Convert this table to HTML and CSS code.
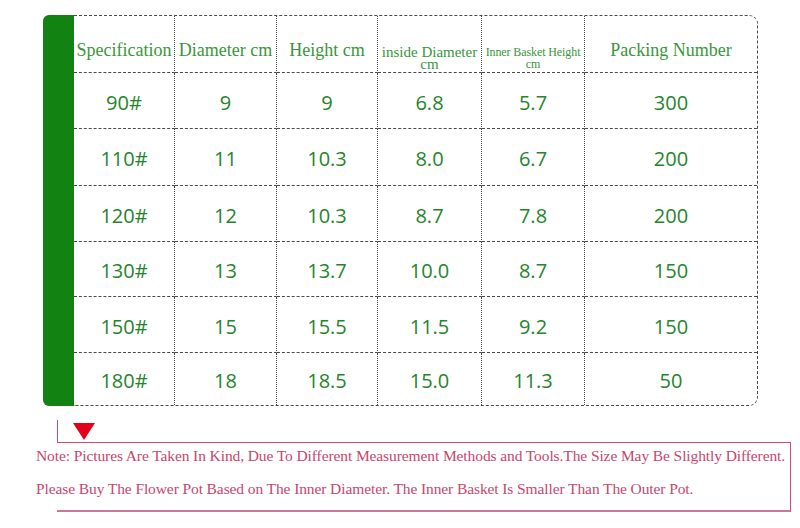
FILE: index.html
```html
<!DOCTYPE html>
<html>
<head>
<meta charset="utf-8">
<link rel="stylesheet" href="styles.css">
</head>
<body>
<div class="spec">
  <div class="bar"></div>
  <div class="table">
    <div class="cell head"><span>Specification</span></div>
    <div class="cell head"><span>Diameter cm</span></div>
    <div class="cell head"><span>Height cm</span></div>
    <div class="cell head two"><span class="lines">inside Diameter<br>cm</span></div>
    <div class="cell head two small"><span class="lines">Inner Basket Height<br>cm</span></div>
    <div class="cell head last"><span>Packing Number</span></div>

    <div class="cell">90#</div><div class="cell">9</div><div class="cell">9</div><div class="cell">6.8</div><div class="cell">5.7</div><div class="cell last">300</div>
    <div class="cell">110#</div><div class="cell">11</div><div class="cell">10.3</div><div class="cell">8.0</div><div class="cell">6.7</div><div class="cell last">200</div>
    <div class="cell">120#</div><div class="cell">12</div><div class="cell">10.3</div><div class="cell">8.7</div><div class="cell">7.8</div><div class="cell last">200</div>
    <div class="cell">130#</div><div class="cell">13</div><div class="cell">13.7</div><div class="cell">10.0</div><div class="cell">8.7</div><div class="cell last">150</div>
    <div class="cell">150#</div><div class="cell">15</div><div class="cell">15.5</div><div class="cell">11.5</div><div class="cell">9.2</div><div class="cell last">150</div>
    <div class="cell end">180#</div><div class="cell end">18</div><div class="cell end">18.5</div><div class="cell end">15.0</div><div class="cell end">11.3</div><div class="cell end last">50</div>
  </div>
</div>

<div class="note">
  <div class="note-head"><span class="arrow"></span></div>
  <div class="note-box">
    <p>Note: Pictures Are Taken In Kind, Due To Different Measurement Methods and Tools.The Size May Be Slightly Different.</p>
    <p>Please Buy The Flower Pot Based on The Inner Diameter. The Inner Basket Is Smaller Than The Outer Pot.</p>
  </div>
</div>
</body>
</html>
```

FILE: styles.css
```css
* { box-sizing: border-box; }
html, body { margin: 0; padding: 0; background: #ffffff; }
body { width: 800px; height: 528px; overflow: hidden; }

.spec {
  display: flex;
  margin: 15px 0 0 43px;
  height: 391px;
}
.bar {
  width: 31px;
  background: #128212;
  border-radius: 6px 0 0 6px;
}
.table {
  display: grid;
  grid-template-columns: 101px 102px 101px 104px 103px 172px;
  grid-template-rows: 57px 56px 57px 56px 55px 56px 1fr;
  border-top: 1px dashed #4a4a4a;
  border-right: 1px dashed #4a4a4a;
  border-bottom: 1px dashed #4a4a4a;
  border-radius: 0 9px 9px 0;
}
.cell {
  display: flex;
  align-items: center;
  justify-content: center;
  padding-top: 3px;
  border-right: 1px dotted #3a4a3a;
  border-bottom: 1px dashed #4a4a4a;
  font-family: "Open Sans", "Noto Sans", sans-serif;
  font-size: 20px;
  font-weight: 500;
  color: #25852a;
}
.cell.last { border-right: none; }
.cell.end { border-bottom: none; }

.cell.head {
  flex-direction: column;
  padding-top: 12px;
  font-family: "Liberation Serif", "DejaVu Serif", serif;
  font-size: 18px;
  font-weight: 400;
  color: #3a963a;
  white-space: nowrap;
}
.cell.head.two {
  padding-top: 28px;
  font-size: 15px;
}
.lines {
  display: block;
  text-align: center;
  line-height: 12px;
}
.cell.head.small { font-size: 12px; letter-spacing: -0.1px; }

.note {
  margin-top: 14px;
}
.note-head {
  margin-left: 57px;
  height: 22px;
  border-left: 1.5px solid #d04a6e;
  padding: 3px 0 0 15px;
}
.arrow {
  display: block;
  width: 0;
  height: 0;
  border-left: 11.5px solid transparent;
  border-right: 11.5px solid transparent;
  border-top: 17px solid #e2001a;
}
.note-box {
  margin-left: 57px;
  width: 734px;
  height: 70px;
  padding-top: 0;
  border-top: 1.5px solid #d04a6e;
  border-right: 1.5px solid #d04a6e;
  border-bottom: 2px solid #c9779a;
}
.note-box p {
  margin: -4px 0 4px -21px;
  font-family: "Liberation Serif", "DejaVu Serif", serif;
  font-size: 15.5px;
  letter-spacing: -0.1px;
  line-height: 33px;
  color: #c8466e;
  white-space: nowrap;
}
```
